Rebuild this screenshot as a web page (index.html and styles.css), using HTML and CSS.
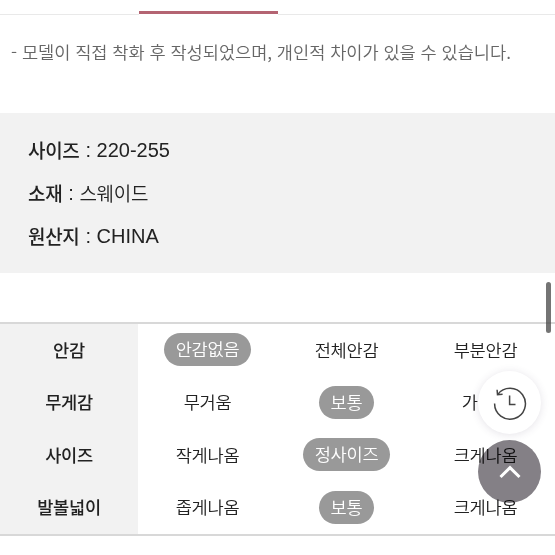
FILE: index.html
```html
<!DOCTYPE html>
<html lang="ko">
<head>
<meta charset="utf-8">
<title>상품 정보</title>
<link rel="stylesheet" href="styles.css">
</head>
<body>
<nav class="tabs"><span class="tab"></span><span class="tab active"></span><span class="tab wide"></span></nav>
<p class="note">- 모델이 직접 착화 후 작성되었으며, 개인적 차이가 있을 수 있습니다.</p>
<section class="info">
  <div><b>사이즈</b><i>:</i><span class="latin">220-255</span></div>
  <div><b>소재</b><i>:</i>스웨이드</div>
  <div><b>원산지</b><i>:</i><span class="latin">CHINA</span></div>
</section>
<section class="specs">
  <div class="row"><b>안감</b><span><em>안감없음</em></span><span>전체안감</span><span>부분안감</span></div>
  <div class="row"><b>무게감</b><span>무거움</span><span><em>보통</em></span><span>가벼움</span></div>
  <div class="row"><b>사이즈</b><span>작게나옴</span><span><em>정사이즈</em></span><span>크게나옴</span></div>
  <div class="row"><b>발볼넓이</b><span>좁게나옴</span><span><em>보통</em></span><span>크게나옴</span></div>
</section>
<div class="scrollbar"></div>
<button class="fab recent" aria-label="최근 본 상품">
  <svg width="36" height="36" viewBox="0 0 36 36" fill="none" stroke="#444" stroke-width="1.5"><path d="M2.6 18.5A15.4 15.4 0 1 0 5.6 9.6M5.1 4.8L5.5 9.8L10.6 9.3M17.6 10.5V19.4H23.5"/></svg>
</button>
<div class="fab shade"></div>
<button class="fab top" aria-label="맨 위로">
  <svg width="24" height="16" viewBox="0 0 24 16" fill="none" stroke="#fff" stroke-width="3"><path d="M2.5 13L12 3.6L21.5 13"/></svg>
</button>
</body>
</html>
```
FILE: styles.css
```css
* { box-sizing: border-box; }
body {
  position: relative;
  margin: 0;
  height: 555px;
  overflow: hidden;
  background: #fff;
  color: #222;
  font: 350 17.6px/26px "Noto Sans CJK KR", sans-serif;
  letter-spacing: -0.3px;
}
b { font-weight: 500; }
.tabs { display: grid; grid-template-columns: 139px 139px 1fr; height: 15px; }
.tab { border-bottom: 1px solid #e9e9e9; }
.tab.active { height: 14px; border-bottom: 3px solid #b46472; }
.note {
  margin: 0;
  height: 98px;
  padding: 24px 0 0 11px;
  color: #666;
  white-space: nowrap;
  letter-spacing: -0.05px;
}
.info {
  display: flex;
  flex-direction: column;
  gap: 17px;
  height: 160px;
  padding: 24px 28px;
  background: #f2f2f2;
  font-size: 19px;
}
.info div { display: flex; height: 26px; }
.info i { width: 17px; text-align: center; font: 20px/27px "Liberation Sans", sans-serif; }
.latin { font: 20px/27px "Liberation Sans", sans-serif; letter-spacing: 0; }
.specs {
  margin-top: 49px;
  height: 214px;
  border-top: 2px solid #d8d8d8;
  border-bottom: 2px solid #d8d8d8;
}
.row { display: grid; grid-template-columns: 138px 139px 139px 139px; height: 52.5px; text-align: center; }
.row > * { display: flex; align-items: center; justify-content: center; padding-bottom: 1px; }
.row em {
  height: 33px;
  padding: 0 11.5px;
  border-radius: 17px;
  background: #999;
  color: #fff;
  font-style: normal;
  line-height: 32px;
}
.row b { background: #f2f2f2; }
.scrollbar {
  position: absolute;
  left: 546px;
  top: 282px;
  width: 5px;
  height: 51px;
  border-radius: 3px;
  background: rgba(70, 70, 70, .75);
}
.fab {
  position: absolute;
  left: 478px;
  display: flex;
  align-items: center;
  justify-content: center;
  width: 63px;
  height: 63px;
  padding: 0;
  border: 0;
  border-radius: 50%;
}
.recent { top: 371px; background: #fff; box-shadow: 0 1px 8px rgba(70, 60, 90, .14); }
.shade, .top { top: 440px; }
.shade { background: #848086; mix-blend-mode: multiply; }
.top { background: transparent; }
```
